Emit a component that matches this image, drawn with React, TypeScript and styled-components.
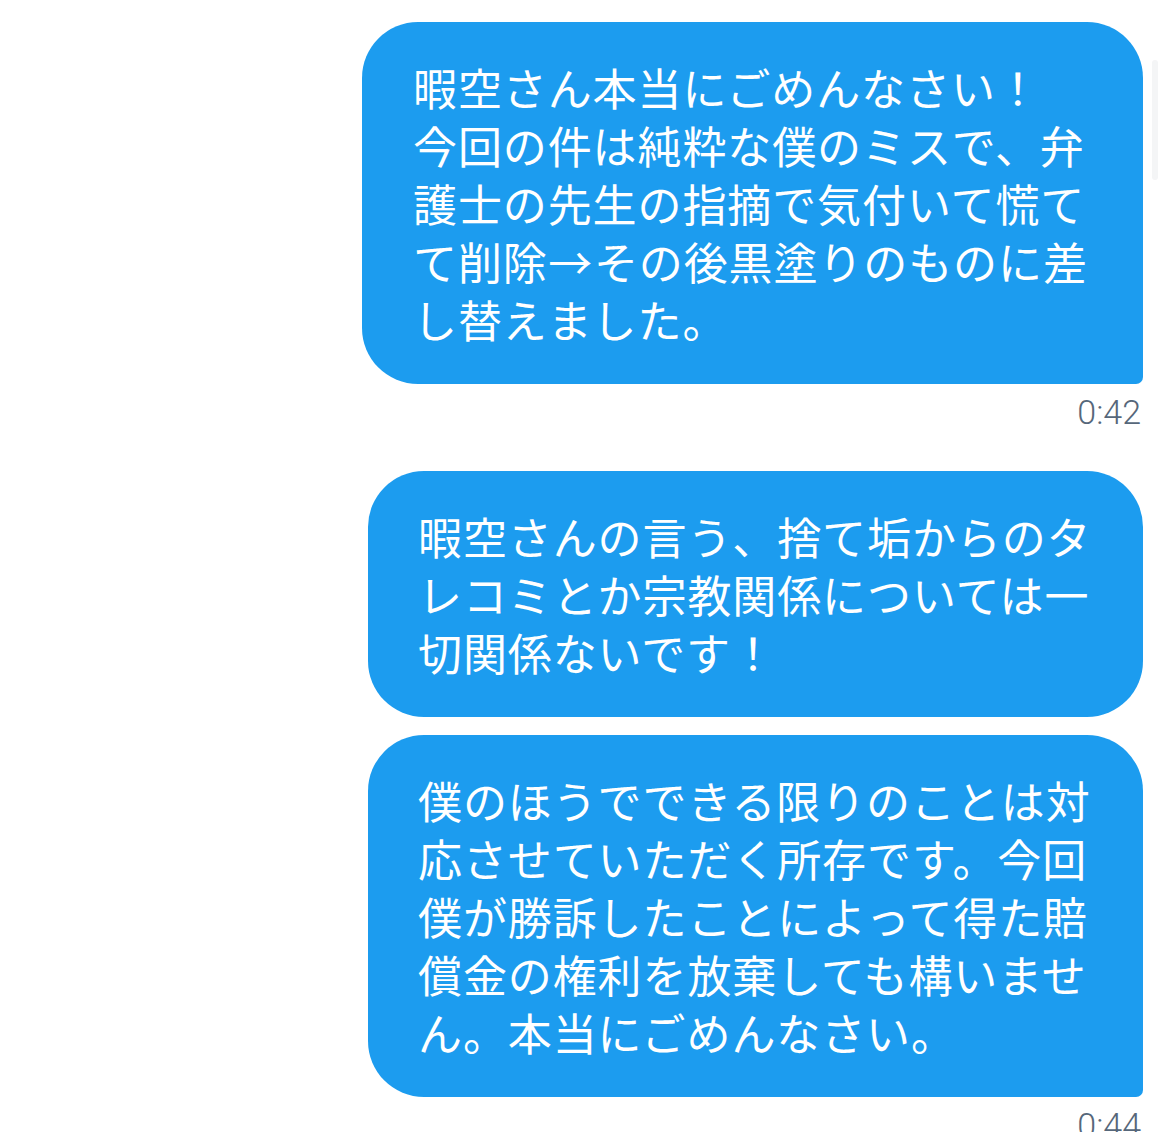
import React from "react";
import styled, { createGlobalStyle } from "styled-components";

const GlobalStyle = createGlobalStyle`
  html, body {
    margin: 0;
    padding: 0;
    background: #ffffff;
  }
  body {
    font-family: "Noto Sans CJK JP", "Noto Sans", sans-serif;
    overflow: hidden;
  }
`;

const Thread = styled.div`
  position: relative;
  display: flex;
  flex-direction: column;
  align-items: flex-end;
  padding: 22px 27px 0 0;
  height: 1132px;
  box-sizing: border-box;
  overflow: hidden;
`;

const Bubble = styled.div<{ width: number; tail?: boolean; gapAfter?: number }>`
  width: ${(p) => p.width}px;
  box-sizing: border-box;
  padding: 36px 30px 36px ${(p) => (p.width > 778 ? 51 : 50)}px;
  background: #1c9cef;
  color: #ffffff;
  font-family: "Noto Sans CJK JP", "Noto Sans", sans-serif;
  font-size: 44px;
  line-height: 58px;
  letter-spacing: 0.9px;
  border-radius: ${(p) => (p.tail ? "56px 56px 7px 56px" : "56px")};
  margin-bottom: ${(p) => p.gapAfter ?? 0}px;
`;

const Line = styled.div`
  white-space: nowrap;
`;

const Arrow = styled.span`
  display: inline-block;
  width: 1.05em;
  text-align: center;
`;

const Time = styled.div<{ gapAfter?: number }>`
  margin-top: 8px;
  margin-bottom: ${(p) => p.gapAfter ?? 0}px;
  margin-right: 2px;
  font-family: "Roboto", "Liberation Sans", sans-serif;
  font-weight: 300;
  font-size: 34px;
  line-height: 40px;
  color: #56677a;
`;

const ScrollThumb = styled.div`
  position: absolute;
  right: 12px;
  top: 60px;
  width: 6px;
  height: 120px;
  border-radius: 3px;
  background: #f4f5f6;
`;

type Msg = {
  lines: React.ReactNode[];
  width: number;
  tail?: boolean;
  time?: string;
  gapAfter?: number;
};

const messages: Msg[] = [
  {
    lines: [
      "暇空さん本当にごめんなさい！",
      "今回の件は純粋な僕のミスで、弁",
      "護士の先生の指摘で気付いて慌て",
      <>
        て削除<Arrow>→</Arrow>その後黒塗りのものに差
      </>,
      "し替えました。",
    ],
    width: 781,
    tail: true,
    time: "0:42",
    gapAfter: 39,
  },
  {
    lines: [
      "暇空さんの言う、捨て垢からのタ",
      "レコミとか宗教関係については一",
      "切関係ないです！",
    ],
    width: 775,
    gapAfter: 18,
  },
  {
    lines: [
      "僕のほうでできる限りのことは対",
      "応させていただく所存です。今回",
      "僕が勝訴したことによって得た賠",
      "償金の権利を放棄しても構いませ",
      "ん。本当にごめんなさい。",
    ],
    width: 775,
    tail: true,
    time: "0:44",
  },
];

export default function App() {
  return (
    <>
      <GlobalStyle />
      <Thread>
        <ScrollThumb />
        {messages.map((m, i) => (
          <React.Fragment key={i}>
            <Bubble width={m.width} tail={m.tail} gapAfter={m.time ? 0 : m.gapAfter}>
              {m.lines.map((l, j) => (
                <Line key={j}>{l}</Line>
              ))}
            </Bubble>
            {m.time && <Time gapAfter={m.gapAfter}>{m.time}</Time>}
          </React.Fragment>
        ))}
      </Thread>
    </>
  );
}
